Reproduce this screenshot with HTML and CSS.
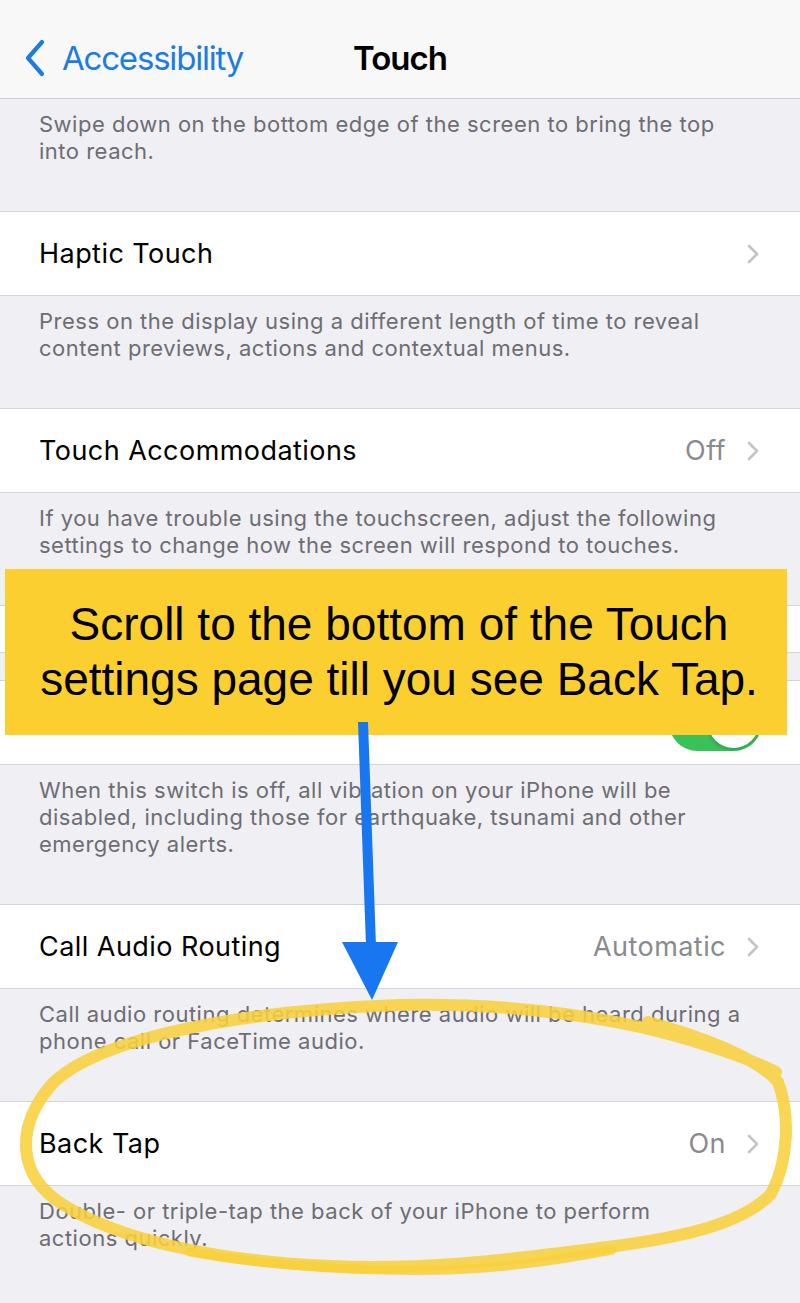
FILE: index.html
```html
<!DOCTYPE html>
<html lang="en">
<head>
<meta charset="utf-8">
<title>Touch</title>
<link rel="stylesheet" href="styles.css">
</head>
<body>
<div class="screen">
  <header class="nav">
    <a class="back">
      <svg class="back-chevron" width="22" height="38" viewBox="0 0 22 38"><path d="M18 3 L4 19 L18 35" fill="none" stroke="#1c7ce4" stroke-width="4.2" stroke-linecap="round" stroke-linejoin="round"/></svg>
      <span>Accessibility</span>
    </a>
    <h1 class="title">Touch</h1>
    <span></span>
  </header>

  <p class="note">Swipe down on the bottom edge of the screen to bring the top<br>into reach.</p>

  <div class="row">
    <span class="label">Haptic Touch</span>
    <span class="detail"><svg class="chev" width="14" height="22" viewBox="0 0 14 22"><path d="M3 3 L11 11 L3 19" fill="none" stroke="#c4c4c8" stroke-width="2.6" stroke-linecap="round" stroke-linejoin="round"/></svg></span>
  </div>

  <p class="note">Press on the display using a different length of time to reveal<br>content previews, actions and contextual menus.</p>

  <div class="row">
    <span class="label">Touch Accommodations</span>
    <span class="detail"><span class="value">Off</span><svg class="chev" width="14" height="22" viewBox="0 0 14 22"><path d="M3 3 L11 11 L3 19" fill="none" stroke="#c4c4c8" stroke-width="2.6" stroke-linecap="round" stroke-linejoin="round"/></svg></span>
  </div>

  <p class="note">If you have trouble using the touchscreen, adjust the following<br>settings to change how the screen will respond to touches.</p>

  <div class="row row-short"></div>
  <div class="spacer"></div>
  <div class="row">
    <span></span>
    <span class="toggle"><span class="knob"></span></span>
  </div>

  <p class="note">When this switch is off, all vibration on your iPhone will be<br>disabled, including those for earthquake, tsunami and other<br>emergency alerts.</p>

  <div class="row">
    <span class="label">Call Audio Routing</span>
    <span class="detail"><span class="value">Automatic</span><svg class="chev" width="14" height="22" viewBox="0 0 14 22"><path d="M3 3 L11 11 L3 19" fill="none" stroke="#c4c4c8" stroke-width="2.6" stroke-linecap="round" stroke-linejoin="round"/></svg></span>
  </div>

  <p class="note">Call audio routing determines where audio will be heard during a<br>phone call or FaceTime audio.</p>

  <div class="row">
    <span class="label">Back Tap</span>
    <span class="detail"><span class="value">On</span><svg class="chev" width="14" height="22" viewBox="0 0 14 22"><path d="M3 3 L11 11 L3 19" fill="none" stroke="#c4c4c8" stroke-width="2.6" stroke-linecap="round" stroke-linejoin="round"/></svg></span>
  </div>

  <p class="note">Double- or triple-tap the back of your iPhone to perform<br>actions quickly.</p>

  <div class="banner">Scroll to the bottom of the Touch<br>settings page till you see Back Tap.</div>

  <svg class="marks" width="800" height="1303" viewBox="0 0 800 1303">
    <polygon points="358,722 368,722 376,946 366,946" fill="#1877f0"/>
    <polygon points="342,942 398,942 372,1000" fill="#1877f0"/>
    <g fill="none" stroke="#f8d03c" stroke-opacity="0.88" stroke-linecap="round" stroke-linejoin="round">
      <path d="M648 1022 C700 1036 758 1058 778 1082 C790 1114 789 1160 771 1194 C742 1224 682 1238 600 1248 C500 1261 420 1270 330 1266 C220 1261 120 1241 62 1204 C18 1176 14 1128 52 1084 C100 1036 250 1010 400 1005 C500 1003 580 1014 640 1027 C684 1037 742 1055 776 1072" stroke-width="12"/>
      <path d="M190 1252 C270 1266 360 1272 450 1270 C520 1267 570 1258 612 1250" stroke-width="9"/>
    </g>
  </svg>
</div>
</body>
</html>
```

FILE: styles.css
```css
* { box-sizing: border-box; }

html, body {
  margin: 0;
  padding: 0;
}

body {
  background: #efeff4;
  font-family: Inter, "Noto Sans", "DejaVu Sans", sans-serif;
}

.screen {
  position: relative;
  width: 800px;
  height: 1303px;
  overflow: hidden;
  background: #efeff4;
}

.nav {
  height: 99px;
  padding-top: 17px;
  background: #f8f8f8;
  border-bottom: 1px solid #cfcfd3;
  display: grid;
  grid-template-columns: 1fr auto 1fr;
  align-items: center;
}

.back {
  display: flex;
  align-items: center;
  gap: 16px;
  padding-left: 24px;
  color: #1c7ce4;
  font-size: 33px;
  letter-spacing: -1.2px;
}

.back-chevron {
  display: block;
}

.title {
  margin: 0;
  font-size: 33px;
  font-weight: 600;
  color: #000;
  letter-spacing: -1px;
}

.note {
  margin: 0;
  padding: 12px 20px 46px 39px;
  font-size: 22px;
  line-height: 27px;
  color: #6d6d72;
  letter-spacing: 0.5px;
  white-space: nowrap;
}

.row {
  height: 85px;
  background: #fff;
  border-top: 1px solid #d4d4d8;
  border-bottom: 1px solid #d4d4d8;
  display: flex;
  align-items: center;
  justify-content: space-between;
  padding: 0 40px 0 39px;
}

.row-short {
  height: 48px;
}

.spacer {
  height: 27px;
}

.label {
  font-size: 27px;
  color: #000;
  letter-spacing: 0.45px;
}

.detail {
  display: flex;
  align-items: center;
  gap: 20px;
}

.value {
  font-size: 27px;
  color: #8a8a8e;
  letter-spacing: 0.45px;
}

.chev {
  display: block;
}

.toggle {
  position: relative;
  width: 93px;
  height: 57px;
  border-radius: 29px;
  background: #3ac25a;
  margin-right: -2px;
}

.knob {
  position: absolute;
  top: 3px;
  right: 3px;
  width: 51px;
  height: 51px;
  border-radius: 50%;
  background: #fff;
  box-shadow: 0 2px 4px rgba(0,0,0,0.2);
}

.banner {
  position: absolute;
  left: 5px;
  top: 569px;
  width: 782px;
  height: 166px;
  padding-top: 28px;
  padding-left: 6px;
  background: #fccf31;
  color: #000;
  font-family: "Liberation Sans", Arial, sans-serif;
  font-size: 46px;
  line-height: 55px;
  text-align: center;
}

.marks {
  position: absolute;
  left: 0;
  top: 0;
  pointer-events: none;
}
```
